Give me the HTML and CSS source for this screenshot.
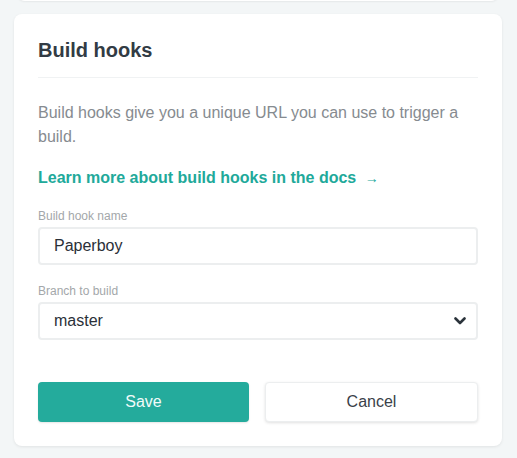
FILE: index.html
```html
<!DOCTYPE html>
<html>
<head>
<meta charset="utf-8">
<link rel="stylesheet" href="styles.css">
</head>
<body>
<div class="prev-card"></div>
<div class="card">
  <h2 class="title">Build hooks</h2>
  <p class="desc">Build hooks give you a unique URL you can use to trigger a build.</p>
  <a class="link" href="#">Learn more about build hooks in the docs <span class="arrow">→</span></a>
  <label class="label">Build hook name</label>
  <div class="field">Paperboy</div>
  <label class="label label-2">Branch to build</label>
  <div class="field select">
    <span>master</span>
    <svg class="chev" width="12" height="8" viewBox="0 0 12 8"><path d="M1.5 1.5 L6 6 L10.5 1.5" fill="none" stroke="#2b333b" stroke-width="2.6" stroke-linecap="round" stroke-linejoin="round"/></svg>
  </div>
  <div class="actions">
    <button class="btn btn-primary">Save</button>
    <button class="btn btn-secondary">Cancel</button>
  </div>
</div>
</body>
</html>
```
FILE: styles.css
```css
html, body {
  margin: 0;
  padding: 0;
  background: #f3f6f7;
  font-family: "Liberation Sans", Arial, sans-serif;
}
body {
  padding: 0 15px 0 14px;
  position: relative;
  height: 458px;
  overflow: hidden;
}
.prev-card {
  position: absolute;
  left: 17px;
  right: 18px;
  top: -20px;
  height: 21px;
  background: #fff;
  border-radius: 8px;
  box-shadow: 0 1px 2px rgba(0,0,0,0.06);
}
.card {
  margin-top: 14px;
  background: #fff;
  border-radius: 8px;
  box-shadow: 0 1px 3px rgba(0,0,0,0.08);
  padding: 24px 24px 24px 24px;
  display: flex;
  flex-direction: column;
}
.title {
  margin: 0;
  font-size: 20px;
  line-height: 24px;
  font-weight: 700;
  color: #323b44;
  padding-bottom: 15px;
  border-bottom: 1px solid #f0f2f3;
}
.desc {
  margin: 23px 0 0;
  font-size: 16px;
  line-height: 24px;
  color: #868b90;
}
.link {
  margin-top: 17px;
  font-size: 16px;
  line-height: 24px;
  font-weight: 700;
  color: #21a99a;
  text-decoration: none;
}
.arrow {
  font-weight: 400;
  font-size: 14px;
  margin-left: 4px;
}
.label {
  margin-top: 18px;
  font-size: 12px;
  line-height: 16px;
  color: #a3a7aa;
  margin-bottom: 3px;
}
.label-2 {
  margin-top: 18px;
  margin-bottom: 3px;
}
.field {
  height: 38px;
  box-sizing: border-box;
  border: 2px solid #eceeef;
  border-radius: 4px;
  padding: 0 14px;
  font-size: 16px;
  color: #2a3038;
  display: flex;
  align-items: center;
}
.select {
  justify-content: space-between;
  padding-right: 10px;
}
.chev {
  display: block;
}
.actions {
  margin-top: 42px;
  display: flex;
  gap: 16px;
}
.btn {
  flex: 1;
  height: 40px;
  border-radius: 4px;
  font-family: "Liberation Sans", Arial, sans-serif;
  font-size: 16px;
  cursor: pointer;
}
.btn-primary {
  background: #24ab9c;
  border: none;
  color: #f1fbfa;
  box-shadow: 0 1px 2px rgba(0,0,0,0.1);
}
.btn-secondary {
  background: #fff;
  border: 1px solid #eceeef;
  color: #3a4149;
  box-shadow: 0 1px 3px rgba(0,0,0,0.12);
}
```
